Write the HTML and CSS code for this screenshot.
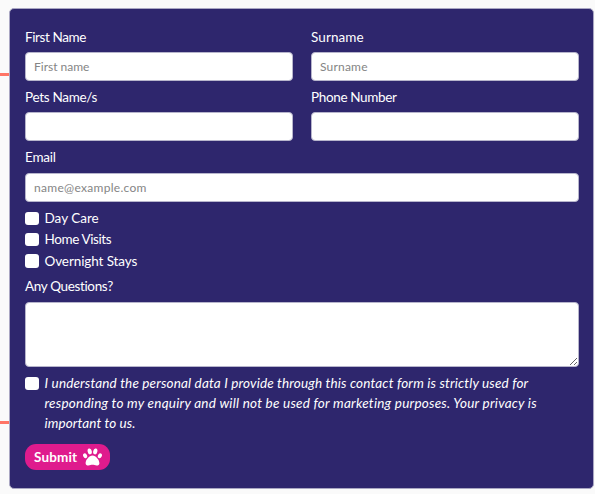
FILE: index.html
```html
<!DOCTYPE html>
<html lang="en">
<head>
<meta charset="utf-8">
<title>Contact form</title>
<link rel="stylesheet" href="styles.css">
</head>
<body>
<span class="rule rule-top"></span>
<span class="rule rule-bottom"></span>
<form class="card">
  <div class="row">
    <div class="field"><label class="t-first" for="first">First Name</label><input id="first" type="text" placeholder="First name"></div>
    <div class="field"><label class="t-surname" for="surname">Surname</label><input id="surname" type="text" placeholder="Surname"></div>
    <div class="field"><label class="t-pets" for="pets">Pets Name/s</label><input id="pets" type="text"></div>
    <div class="field"><label class="t-phone" for="phone">Phone Number</label><input id="phone" type="text"></div>
  </div>
  <div class="field"><label class="t-email" for="email">Email</label><input id="email" type="email" placeholder="name@example.com"></div>
  <div class="checks">
    <label class="check"><input type="checkbox"><span class="t-day">Day Care</span></label>
    <label class="check"><input type="checkbox"><span class="t-home">Home Visits</span></label>
    <label class="check"><input type="checkbox"><span class="t-night">Overnight Stays</span></label>
  </div>
  <div class="field questions"><label class="t-any" for="questions">Any Questions?</label><textarea id="questions"></textarea></div>
  <label class="check consent"><input type="checkbox">
    <span class="copy"><span class="line line-1">I understand the personal data I provide through this contact form is strictly used for</span>
    <span class="line line-2">responding to my enquiry and will not be used for marketing purposes. Your privacy is</span>
    <span class="line line-3">important to us.</span></span>
  </label>
  <button class="submit" type="button"><span>Submit</span>
    <svg viewBox="0 0 512 480" aria-hidden="true"><ellipse cx="181" cy="90" rx="56" ry="80" transform="rotate(-12 181 90)"/><ellipse cx="331" cy="90" rx="56" ry="80" transform="rotate(12 331 90)"/><ellipse cx="57" cy="207" rx="52" ry="68" transform="rotate(-25 57 207)"/><ellipse cx="455" cy="207" rx="52" ry="68" transform="rotate(25 455 207)"/><path d="M256 200C166 200 70 320 70 406C70 446 102 470 145 470C190 470 216 452 256 452C296 452 323 470 367 470C410 470 442 446 442 406C442 320 346 200 256 200Z"/></svg>
  </button>
</form>
</body>
</html>
```
FILE: styles.css
```css
* { box-sizing: border-box; }
body {
  margin: 0;
  padding: 8px 0 0 9px;
  height: 494px;
  overflow: hidden;
  background: #fafafa;
  font-family: Lato, "Liberation Sans", sans-serif;
  font-size: 13.5px;
  font-variant-ligatures: none;
  color: #fff;
}
.rule { position: absolute; left: 0; width: 10px; height: 3px; background: #ff7566; }
.rule-top { top: 73px; }
.rule-bottom { top: 421px; }
.card {
  position: relative;
  width: 585px;
  height: 481px;
  padding: 18px 14px 0 15px;
  background: #2e266d;
  border: 1px solid #aaa7c3;
  border-radius: 5px;
}
.row { display: grid; grid-template-columns: 268px 268px; column-gap: 18px; }
.field { height: 60px; }
.field label { display: block; height: 25px; line-height: 20px; white-space: nowrap; }
input, textarea { font: inherit; margin: 0; outline: none; }
.field input, textarea {
  display: block;
  width: 100%;
  height: 29px;
  padding: 0 8px;
  border: 1px solid #b7b5cc;
  border-radius: 4px;
  background: #fff;
  font-size: 12px;
}
::placeholder { color: #858585; opacity: 1; }
.row + .field { height: 61px; }
.row + .field label { height: 26px; }
.checks { height: 68px; }
.check { display: flex; gap: 6px; height: 21.3px; line-height: 20px; white-space: nowrap; }
.check input {
  appearance: none;
  flex: none;
  width: 13.5px;
  height: 13.5px;
  margin-top: 3.5px;
  background: #fff;
  border-radius: 3px;
}
.questions { height: 97px; }
.questions label { height: 26px; }
textarea { height: 65px; resize: vertical; }
.consent { height: 71px; }
.copy { font-style: italic; }
.line { display: block; height: 20px; }
.t-first { letter-spacing: -.4px; }
.t-surname { letter-spacing: .1px; }
.t-pets { letter-spacing: -.3px; }
.t-phone { letter-spacing: -.35px; }
.t-email { letter-spacing: -.2px; }
.t-home { letter-spacing: -.4px; }
.t-night { letter-spacing: -.1px; }
.t-any { letter-spacing: -.35px; }
#surname { letter-spacing: .2px; }
#email { letter-spacing: .3px; }
.line-1 { letter-spacing: .16px; }
.line-2 { letter-spacing: .235px; }
.line-3 { letter-spacing: .1px; }
.submit {
  display: flex;
  align-items: center;
  justify-content: space-between;
  width: 85px;
  height: 26px;
  padding: 0 8px 0 9px;
  border: 0;
  border-radius: 11px;
  background: #df1b8d;
  color: #fff;
  font: bold 13.5px Lato, "Liberation Sans", sans-serif;
  letter-spacing: .15px;
}
.submit svg { width: 19px; height: 18px; fill: #fff; }
```
